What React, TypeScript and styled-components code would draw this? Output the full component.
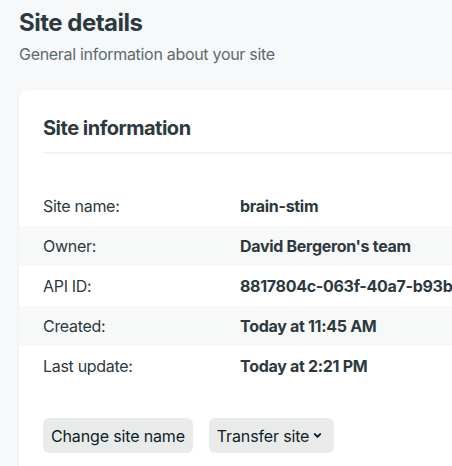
import styled, { createGlobalStyle } from 'styled-components'

const GlobalStyle = createGlobalStyle`
html, body {
  margin: 0;
  padding: 0;
  overflow: hidden;
  background: #f6f8f9;
  font-family: Inter, "Liberation Sans", sans-serif;
  -webkit-font-smoothing: antialiased;
}
`

const rows = [
    { label: 'Site name:', value: 'brain-stim' },
    { label: 'Owner:', value: "David Bergeron's team" },
    { label: 'API ID:', value: '8817804c-063f-40a7-b93b-2a6f1c9e04d5' },
    { label: 'Created:', value: 'Today at 11:45 AM' },
    { label: 'Last update:', value: 'Today at 2:21 PM' },
]

const App = () => {
    return (
        <Page>
            <GlobalStyle />
            <Title>Site details</Title>
            <Subtitle>General information about your site</Subtitle>

            <Card>
                <CardHeader>
                    <CardTitle>Site information</CardTitle>
                </CardHeader>

                <InfoList>
                    {rows.map((row) => (
                        <InfoRow key={row.label}>
                            <Label>{row.label}</Label>
                            <Value>{row.value}</Value>
                        </InfoRow>
                    ))}
                </InfoList>

                <Actions>
                    <Button>Change site name</Button>
                    <Button $menu>
                        Transfer site
                        <svg width="9" height="9" viewBox="0 0 10 10">
                            <path d="M2 3.5 L5 6.5 L8 3.5" fill="none" stroke="currentColor" strokeWidth="2.2" strokeLinecap="round" strokeLinejoin="round" />
                        </svg>
                    </Button>
                </Actions>
            </Card>
        </Page>
    )
}

export default App

const Page = styled.div`
padding: 7px 0 0 19px;
width: 720px;
`

const Title = styled.h1`
margin: 0;
font-size: 24px;
line-height: 32px;
font-weight: 700;
letter-spacing: -0.5px;
color: #2c3a40;
`

const Subtitle = styled.p`
margin: 3px 0 0;
font-size: 16px;
line-height: 24px;
letter-spacing: -0.3px;
color: #5e6a71;
`

const Card = styled.div`
margin-top: 24px;
background: #fff;
border-radius: 8px;
box-shadow: 0 1px 4px rgba(14, 30, 37, 0.05);
padding: 24px 0 40px;
`

const CardHeader = styled.div`
margin: 0 24px;
padding-bottom: 10px;
border-bottom: 2px solid #f0f2f3;
`

const CardTitle = styled.h2`
margin: 0;
font-size: 20px;
line-height: 28px;
font-weight: 700;
letter-spacing: -0.5px;
color: #2c3a40;
`

const InfoList = styled.div`
margin-top: 32px;
`

const InfoRow = styled.div`
display: grid;
grid-template-columns: 197px 1fr;
align-items: center;
height: 40px;
padding-left: 24px;
font-size: 16px;
letter-spacing: -0.3px;
color: #2c3a40;
white-space: nowrap;

&:nth-child(even) {
  background: #f7f8f8;
}
`

const Label = styled.span`
font-weight: 400;
`

const Value = styled.span`
font-weight: 700;
`

const Actions = styled.div`
display: flex;
gap: 16px;
margin: 32px 24px 0;
`

const Button = styled.button<{ $menu?: boolean }>`
display: flex;
align-items: center;
gap: 4px;
height: 35px;
padding: 0 ${(p) => (p.$menu ? '12px' : '8px')} 0 8px;
border: none;
border-radius: 6px;
background: #e9ebeb;
color: #0f1e25;
font-family: inherit;
font-size: 16px;
letter-spacing: -0.15px;
cursor: pointer;
`
